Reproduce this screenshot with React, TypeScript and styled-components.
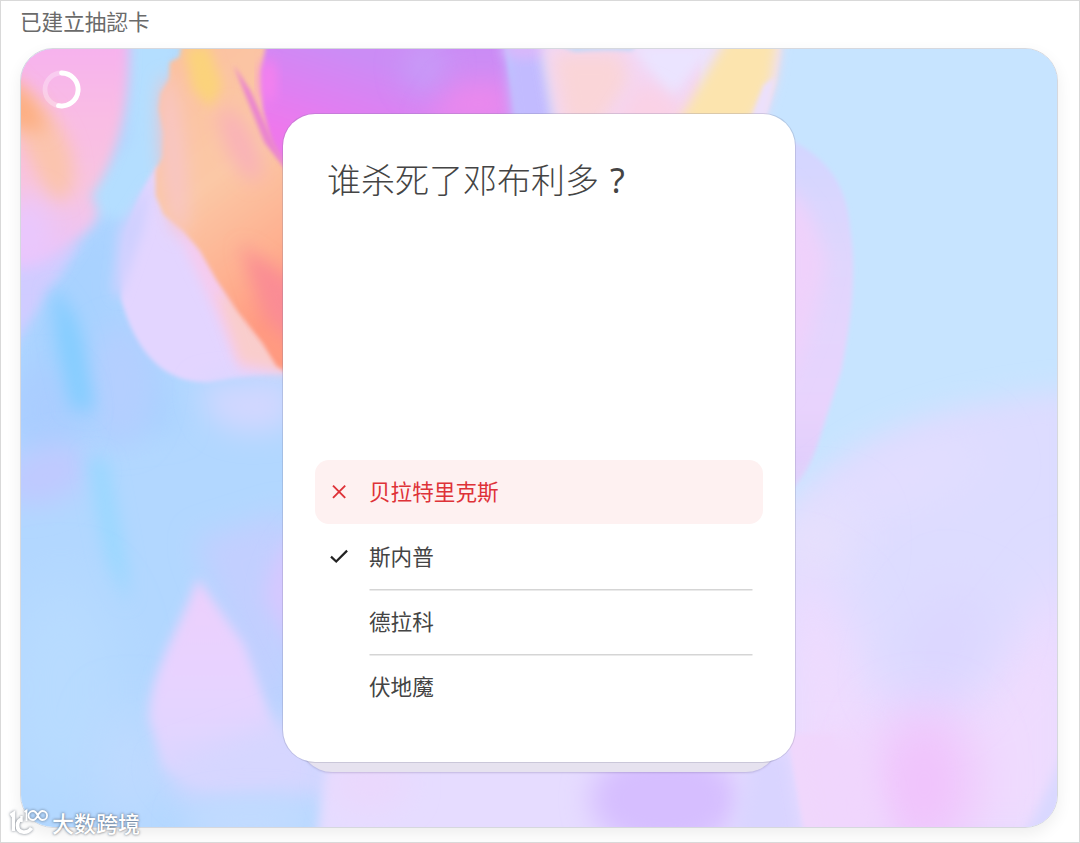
import React from 'react';
import styled, { createGlobalStyle } from 'styled-components';

const GlobalStyle = createGlobalStyle`
  * {
    box-sizing: border-box;
  }

  body {
    margin: 0;
    background: #fff;
    font-family: 'Noto Sans CJK SC', 'Noto Sans', sans-serif;
  }
`;

const Page = styled.div`
  position: relative;
  width: 1080px;
  height: 843px;
  padding: 0 21px 0 19px;
  border: 1px solid #d9d9d9;
  overflow: hidden;
`;

const PageTitle = styled.h1`
  height: 47px;
  margin: 0;
  padding-top: 4px;
  font-family: 'Noto Sans CJK TC', sans-serif;
  font-size: 21.6px;
  font-weight: 400;
  line-height: 32px;
  color: #6a6a6a;
`;

const Panel = styled.div`
  position: relative;
  display: flex;
  flex-direction: column;
  align-items: center;
  height: 780px;
  padding-top: 64px;
  border: 1px solid #d6d8de;
  border-radius: 33px;
  overflow: hidden;
  isolation: isolate;
`;

const PanelShadow = styled.div`
  width: 1038px;
  border-radius: 33px;
  box-shadow: 0 6px 16px rgba(0, 0, 0, 0.07);
`;

const Backdrop = styled.svg`
  position: absolute;
  inset: 0;
  width: 100%;
  height: 100%;
  z-index: -1;
`;

const Spinner = styled.svg`
  position: absolute;
  top: 21px;
  left: 21px;
  width: 39px;
  height: 39px;
`;

const CardStack = styled.div`
  display: flex;
  flex-direction: column;
  align-items: center;
`;

const Card = styled.section`
  position: relative;
  display: flex;
  flex-direction: column;
  width: 514px;
  height: 650px;
  padding: 40px 32px 0;
  border: 1px solid rgba(120, 120, 150, 0.25);
  border-radius: 33px;
  background: #fff;
  background-clip: padding-box;
`;

const NextCard = styled.div`
  width: 480px;
  height: 60px;
  margin-top: -51px;
  border-radius: 0 0 33px 33px;
  background: #e6e2ef;
  box-shadow: 0 1px 2px rgba(90, 80, 130, 0.25);
`;

const Question = styled.h2`
  flex: 1;
  margin: 0;
  padding-left: 12px;
  font-size: 34px;
  font-weight: 300;
  line-height: 50px;
  color: #444;
`;

const Mark = styled.span`
  display: inline-block;
  width: 37px;
  font-family: 'Noto Sans', sans-serif;
  font-weight: 400;
  text-align: center;
`;

const AnswerList = styled.ul`
  display: flex;
  flex-direction: column;
  gap: 1px;
  margin: 0 0 43px;
  padding: 0;
  list-style: none;
`;

const Answer = styled.li<{ $wrong?: boolean }>`
  display: flex;
  align-items: stretch;
  height: 64px;
  padding: 0 10px 0 15px;
  border-radius: 14px;
  background: ${({ $wrong }) => ($wrong ? '#fef1f1' : 'transparent')};
  color: ${({ $wrong }) => ($wrong ? '#de3238' : '#444')};
`;

const AnswerIcon = styled.div<{ $dark?: boolean }>`
  display: flex;
  align-items: center;
  width: 39px;
  color: ${({ $dark }) => ($dark ? '#222' : 'inherit')};

  svg {
    width: 18px;
    height: 18px;
    fill: none;
    stroke: currentColor;
    stroke-width: 1.9;
  }
`;

const AnswerText = styled.div<{ $divider?: boolean }>`
  flex: 1;
  font-size: 21.6px;
  line-height: 62px;
  box-shadow: ${({ $divider }) => ($divider ? '0 2px 0 -0.5px #d5d5d5' : 'none')};
`;

const Watermark = styled.div`
  position: absolute;
  left: 7px;
  bottom: 3px;
  display: flex;
  align-items: center;
  height: 34px;
  font-size: 22px;
  font-weight: 500;
  line-height: 34px;
  color: #fff;
  text-shadow: 0 0 3px rgba(70, 80, 95, 0.6), 0 0 2px rgba(70, 80, 95, 0.5);

  svg {
    width: 42px;
    height: 32px;
    margin-right: 2px;
    overflow: visible;
    filter: drop-shadow(0 0 1.5px rgba(70, 80, 95, 0.75));
  }
`;

type AnswerItem = {
  text: string;
  state?: 'wrong' | 'right';
  divider?: boolean;
};

const answers: AnswerItem[] = [
  { text: '贝拉特里克斯', state: 'wrong' },
  { text: '斯内普', state: 'right', divider: true },
  { text: '德拉科', divider: true },
  { text: '伏地魔' },
];

function Petals() {
  return (
    <Backdrop viewBox="20 48 1038 780" preserveAspectRatio="none">
      <defs>
        <filter id="b2" x="-20%" y="-20%" width="140%" height="140%">
          <feGaussianBlur stdDeviation="2" />
        </filter>
        <filter id="b6" x="-40%" y="-40%" width="180%" height="180%">
          <feGaussianBlur stdDeviation="6" />
        </filter>
        <filter id="b10" x="-80%" y="-60%" width="260%" height="220%">
          <feGaussianBlur stdDeviation="9" />
        </filter>
        <filter id="b14" x="-100%" y="-100%" width="300%" height="300%">
          <feGaussianBlur stdDeviation="14" />
        </filter>
        <filter id="b26" x="-120%" y="-120%" width="340%" height="340%">
          <feGaussianBlur stdDeviation="26" />
        </filter>
        <linearGradient id="leftPink" x1="0" y1="0" x2="0" y2="1">
          <stop offset="0" stopColor="#f6b0f0" />
          <stop offset="0.35" stopColor="#f9bce4" />
          <stop offset="0.65" stopColor="#f8c4e0" />
          <stop offset="1" stopColor="#e6c4ff" />
        </linearGradient>
        <linearGradient id="orange" x1="0" y1="0" x2="0.3" y2="1">
          <stop offset="0" stopColor="#fbc0a0" />
          <stop offset="0.5" stopColor="#fbc8a6" />
          <stop offset="0.8" stopColor="#feb090" />
          <stop offset="1" stopColor="#ff9a80" />
        </linearGradient>
        <linearGradient id="violet" gradientUnits="userSpaceOnUse" x1="340" y1="48" x2="310" y2="140">
          <stop offset="0" stopColor="#cb8cf5" />
          <stop offset="0.6" stopColor="#e07ff2" />
          <stop offset="1" stopColor="#ee78ec" />
        </linearGradient>
        <linearGradient id="rightPetal" x1="0" y1="0" x2="0" y2="1">
          <stop offset="0" stopColor="#d2d6ff" />
          <stop offset="0.35" stopColor="#e0d6fd" />
          <stop offset="0.75" stopColor="#e8d3fd" />
          <stop offset="1" stopColor="#dccbfb" />
        </linearGradient>
        <linearGradient id="lowPetal" x1="0" y1="0" x2="0" y2="1">
          <stop offset="0" stopColor="#edcffc" />
          <stop offset="0.5" stopColor="#e7d3ff" />
          <stop offset="1" stopColor="#dcd6ff" />
        </linearGradient>
      </defs>

      <rect x="0" y="30" width="1080" height="820" fill="#b2d7ff" />
      <rect x="560" y="30" width="520" height="600" fill="#c7e4ff" />

      {/* left field */}
      <path d="M20 330 L60 255 L125 200 L120 300 L165 380 L180 430 L20 450Z" fill="#a9d2ff" filter="url(#b14)" />
      <ellipse cx="120" cy="385" rx="35" ry="60" fill="#b4cfff" filter="url(#b14)" />
      <ellipse cx="45" cy="410" rx="35" ry="45" fill="#aacdff" filter="url(#b14)" />
      <path d="M10 262 L82 240 L44 298 L10 350Z" fill="#d0ccff" filter="url(#b6)" />
      <ellipse cx="45" cy="475" rx="45" ry="28" fill="#c0c9ff" filter="url(#b14)" transform="rotate(-20 45 475)" />
      <path d="M50 286 Q78 310 84 350 L94 412 L70 408 L56 345Z" fill="#84cdff" filter="url(#b10)" />
      <path d="M86 455 L106 460 L126 570 L126 605 L106 560Z" fill="#98d8ff" filter="url(#b10)" />
      <ellipse cx="60" cy="690" rx="55" ry="110" fill="#b8dbff" filter="url(#b26)" />
      <ellipse cx="130" cy="770" rx="22" ry="60" fill="#c4dbff" filter="url(#b26)" />

      {/* upper left petal */}
      <path d="M128 30 H185 L158 100 L160 180 L130 220 L95 215 L90 190 L130 140Z" fill="#b4deff" filter="url(#b6)" />
      <path d="M0 30 H128 C130 100 120 152 90 196 C102 212 98 222 76 240 C56 258 34 266 0 271Z" fill="url(#leftPink)" filter="url(#b6)" />
      <path d="M10 84 C35 95 65 120 72 160 C76 190 64 206 50 198 C35 175 20 140 10 120Z" fill="#fbc4ae" filter="url(#b10)" />
      <path d="M6 74 Q38 98 46 132 L6 124Z" fill="#fdad80" filter="url(#b10)" />
      <ellipse cx="28" cy="230" rx="20" ry="34" fill="#e9c8ff" filter="url(#b14)" />

      {/* lilac petal */}
      <path d="M156 165 C132 200 118 245 120 298 C134 350 162 384 208 382 C240 377 265 373 290 372 V200Z" fill="#e3d5ff" filter="url(#b2)" />
      <path d="M150 180 L142 230 L118 300 L112 290 L118 230Z" fill="#cfd0ff" filter="url(#b6)" />
      <path d="M165 206 L205 250 L240 310 L296 374 L240 372 L214 310Z" fill="#f6cbee" filter="url(#b6)" />
      <path d="M200 386 L290 378 L290 425 Q240 442 212 418Z" fill="#d2d7ff" filter="url(#b14)" />

      {/* orange petal */}
      <path d="M216 290 L250 310 L292 366 L284 371 L240 362Z" fill="#f9cdcc" filter="url(#b6)" />
      <path d="M182 40 L179 56 L169 61 L168 78 L160 92 L158 108 L163 132 L162 156 L155 170 L155 195 L163 214 L182 230 L199 250 L216 280 L236 310 L262 343 L276 366 L290 374 V40Z" fill="url(#orange)" filter="url(#b2)" />
      <ellipse cx="173" cy="155" rx="12" ry="80" fill="#f8c6c4" filter="url(#b10)" transform="rotate(-5 173 155)" />
      <path d="M184 48 L208 44 L222 85 L210 108 L192 88Z" fill="#fbd37c" filter="url(#b6)" />
      <ellipse cx="240" cy="144" rx="14" ry="40" fill="#f9b2b8" filter="url(#b10)" transform="rotate(-25 240 144)" />
      <path d="M240 244 L300 286 V350 L264 318Z" fill="#fa8c94" filter="url(#b10)" />

      {/* violet petal */}
      <path d="M266 40 L261 70 L262 108 L270 142 L290 175 L480 150 L515 120 L505 40Z" fill="url(#violet)" filter="url(#b2)" />
      <path d="M233 64 L250 90 L273 140 L290 174 L264 142Z" fill="#ea84d0" filter="url(#b2)" />
      <ellipse cx="268" cy="80" rx="8" ry="22" fill="#f580ee" filter="url(#b6)" />
      <ellipse cx="425" cy="65" rx="20" ry="26" fill="#c89bf8" filter="url(#b14)" />
      <path d="M455 80 L510 80 L516 125 H425Z" fill="#eb88ed" filter="url(#b14)" />
      <path d="M503 30 H540 L556 130 H513Z" fill="#c2bbff" filter="url(#b6)" />
      <ellipse cx="526" cy="48" rx="24" ry="10" fill="#d9b8fb" filter="url(#b6)" />

      {/* cream petal */}
      <path d="M540 40 H781 C780 70 772 95 760 130 H555Z" fill="#f3d6f4" filter="url(#b6)" />
      <path d="M700 40 H781 C780 70 772 95 760 130 H700Z" fill="#ece0fb" filter="url(#b2)" />
      <path d="M552 52 H620 L630 80 L600 125 H565Z" fill="#fad5d8" filter="url(#b10)" />
      <path d="M630 44 H715 L672 98Z" fill="#ebe4ff" filter="url(#b6)" />
      <path d="M640 80 L675 98 L688 128 H610Z" fill="#fad2e6" filter="url(#b10)" />
      <path d="M728 36 H779 L772 80 L750 125 H676Z" fill="#fce4ae" filter="url(#b6)" />
      <path d="M548 40 H640 L632 50 Q600 48 575 51Z" fill="#c6d9f6" filter="url(#b2)" />
      <path d="M776 76 L764 84 L750 122 H764Z" fill="#ece0fb" filter="url(#b2)" />

      {/* right petal */}
      <path d="M780 134 C830 155 848 186 851 230 C858 275 851 325 842 370 L818 445 C810 468 800 486 780 500Z" fill="url(#rightPetal)" filter="url(#b2)" />
      <path d="M784 180 L812 215 L828 262 L812 330 L784 400Z" fill="#efd1fb" filter="url(#b10)" />

      {/* lower right field */}
      <path d="M780 525 C830 455 900 405 1080 390 V850 H780Z" fill="#dddcff" filter="url(#b14)" />
      <ellipse cx="900" cy="480" rx="90" ry="22" fill="#e5deff" filter="url(#b26)" transform="rotate(-20 900 480)" />
      <ellipse cx="815" cy="540" rx="40" ry="35" fill="#e9e1fc" filter="url(#b26)" />
      <path d="M780 560 L840 600 L880 710 L980 690 L1080 560 V850 H780Z" fill="#efdbfe" filter="url(#b26)" />
      <ellipse cx="945" cy="650" rx="38" ry="62" fill="#dcd6ff" filter="url(#b26)" transform="rotate(25 945 650)" />
      <ellipse cx="925" cy="785" rx="50" ry="75" fill="#f0c3fc" filter="url(#b26)" />
      <path d="M1070 745 L1024 840 H1070Z" fill="#d9d8ff" filter="url(#b6)" />

      {/* lower left petal */}
      <path d="M195 540 L290 510 V740 L240 660Z" fill="#c2cfff" filter="url(#b14)" />
      <path d="M298 525 Q265 560 264 600 L298 665Z" fill="#d5c8ff" filter="url(#b10)" />
      <path d="M197 578 C180 628 148 672 148 720 L162 768 C200 795 250 790 296 770 L270 715 L244 645Z" fill="url(#lowPetal)" filter="url(#b6)" />
      <path d="M158 766 L300 715 L340 790 L300 802 H185Z" fill="#d6d6ff" filter="url(#b14)" />
      <ellipse cx="250" cy="822" rx="70" ry="20" fill="#c3dbff" filter="url(#b14)" />

      {/* bottom petals */}
      <path d="M328 750 H790 L806 850 H314Z" fill="#e6dcff" filter="url(#b6)" />
      <ellipse cx="370" cy="785" rx="40" ry="28" fill="#ead8fd" filter="url(#b14)" />
      <ellipse cx="665" cy="800" rx="75" ry="50" fill="#d6beff" filter="url(#b14)" />
      <path d="M752 750 H790 L805 845 H732Z" fill="#d9d4ff" filter="url(#b10)" />
      <path d="M788 735 L806 840 H850 L835 735Z" fill="#f0d7fc" filter="url(#b2)" />
      <path d="M806 735 H860 L890 850 H826Z" fill="#f0d6fd" filter="url(#b14)" />
    </Backdrop>
  );
}

function WrongIcon() {
  return (
    <svg viewBox="0 0 18 18">
      <path d="M3 2.6 15.2 14.8M15.2 2.6 3 14.8" />
    </svg>
  );
}

function RightIcon() {
  return (
    <svg viewBox="0 0 18 18">
      <path d="M1 8.6 6.2 13.5 17.1 2.6" strokeWidth="2.2" />
    </svg>
  );
}

function App() {
  return (
    <>
      <GlobalStyle />
      <Page>
        <PageTitle>已建立抽認卡</PageTitle>
        <PanelShadow>
          <Panel>
            <Petals />
            <Spinner viewBox="0 0 39 39" fill="none" stroke="#fff" strokeWidth="4.8">
              <circle cx="19.5" cy="19.5" r="16.5" strokeOpacity="0.3" />
              <path d="M19.5 3A16.5 16.5 0 1 1 16.5 35.7" strokeLinecap="round" />
            </Spinner>
            <CardStack>
              <Card>
                <Question>
                  谁杀死了邓布利多<Mark>?</Mark>
                </Question>
                <AnswerList>
                  {answers.map(({ text, state, divider }) => (
                    <Answer key={text} $wrong={state === 'wrong'}>
                      <AnswerIcon $dark={state === 'right'}>
                        {state === 'wrong' && <WrongIcon />}
                        {state === 'right' && <RightIcon />}
                      </AnswerIcon>
                      <AnswerText $divider={divider}>{text}</AnswerText>
                    </Answer>
                  ))}
                </AnswerList>
              </Card>
              <NextCard />
            </CardStack>
          </Panel>
        </PanelShadow>
        <Watermark>
          <svg viewBox="0 0 42 32" fill="none" stroke="#fff">
            <path d="M2.5 9.5 5.5 7.5V25" strokeWidth="3.4" />
            <path d="M14 13C10.5 14 9.5 17 9.5 19.5C9.5 27 19 28.5 23.5 22" strokeWidth="3.8" />
            <path d="M16.5 6 18.5 4.5V15" strokeWidth="1.8" />
            <path d="M13.5 10V16" strokeWidth="2.4" />
            <path d="M29.8 9.5C28.4 6.6 27 5 25 5A4.5 4.5 0 0 0 25 14C27 14 28.4 12.4 29.8 9.5C31.2 6.600 32.600 5 34.600 5A4.5 4.5 0 0 1 34.600 14C32.600 14 31.200 12.400 29.800 9.500Z" strokeWidth="1.8" />
          </svg>
          大数跨境
        </Watermark>
      </Page>
    </>
  );
}

export default App;
